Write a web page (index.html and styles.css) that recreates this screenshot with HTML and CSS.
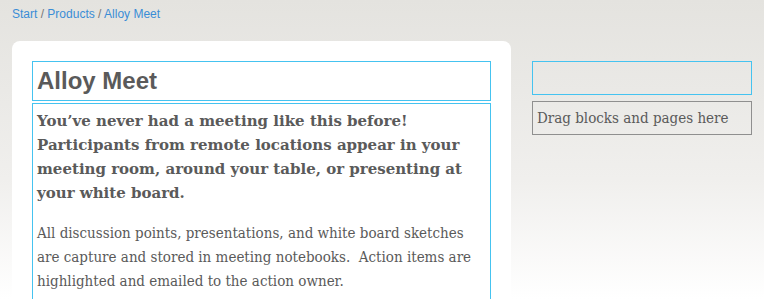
FILE: index.html
```html
<!DOCTYPE html>
<html lang="en">
<head>
  <meta charset="UTF-8">
  <title>Alloy Meet</title>
  <link rel="stylesheet" href="styles.css">
</head>
<body>
  <!-- Breadcrumb -->
  <div class="breadcrumb">
    <a href="#">Start</a> / <a href="#">Products</a> / <a href="#">Alloy Meet</a>
  </div>

  <div class="layout">
    <!-- Main card -->
    <div class="card">
      <div class="block title-block">
        <h1>Alloy Meet</h1>
      </div>
      <div class="block body-block">
        <p class="lead">You’ve never had a meeting like this before! Participants from remote locations appear in your meeting room, around your table, or presenting at your white board.</p>
        <p>All discussion points, presentations, and white board sketches are capture and stored in meeting notebooks.&nbsp; Action items are highlighted and emailed to the action owner.</p>
      </div>
    </div>

    <!-- Sidebar drop zone -->
    <div class="sidebar">
      <div class="block empty-block"></div>
      <div class="drop-zone">Drag blocks and pages here</div>
    </div>
  </div>
</body>
</html>
```

FILE: styles.css
```css
html, body {
  height: 100%;
}

body {
  margin: 0;
  padding: 0;
  font-family: "DejaVu Serif", Georgia, serif;
  color: #5a5a5a;
  background: linear-gradient(to bottom, #e4e3df 0%, #f0efed 60%, #ffffff 100%);
  overflow: hidden;
}

.breadcrumb {
  padding: 7px 12px 0;
  height: 34px;
  font-family: "Liberation Sans", Arial, sans-serif;
  font-size: 12px;
  color: #777;
}

.breadcrumb a {
  color: #3a8dd6;
  text-decoration: none;
}

.layout {
  display: flex;
  align-items: flex-start;
  padding-left: 12px;
}

.card {
  width: 459px;
  padding: 20px 20px 40px;
  background: #ffffff;
  border-radius: 8px;
}

.block {
  border: 1px solid #45c3f0;
}

.title-block {
  margin-bottom: 2px;
  padding: 3px 4px;
  height: 32px;
}

h1 {
  margin: 0;
  font-family: "Liberation Sans", Arial, sans-serif;
  font-size: 24px;
  line-height: 32px;
  font-weight: bold;
  color: #5a5a5a;
}

.body-block {
  padding: 5px 4px 20px;
}

.body-block p {
  margin: 0 0 16px;
  font-family: "DejaVu Serif Condensed", "DejaVu Serif", Georgia, serif;
  font-stretch: condensed;
  font-size: 15px;
  line-height: 24px;
}

.body-block .lead {
  font-family: "DejaVu Serif", Georgia, serif;
  font-stretch: normal;
  font-weight: bold;
}

.sidebar {
  margin-left: 21px;
  margin-top: 20px;
  width: 220px;
}

.empty-block {
  height: 32px;
  margin-bottom: 6px;
}

.drop-zone {
  border: 1px solid #8f8f8f;
  padding: 4px 4px;
  height: 24px;
  font-family: "DejaVu Serif Condensed", "DejaVu Serif", Georgia, serif;
  font-stretch: condensed;
  font-size: 15px;
  line-height: 24px;
}
```
